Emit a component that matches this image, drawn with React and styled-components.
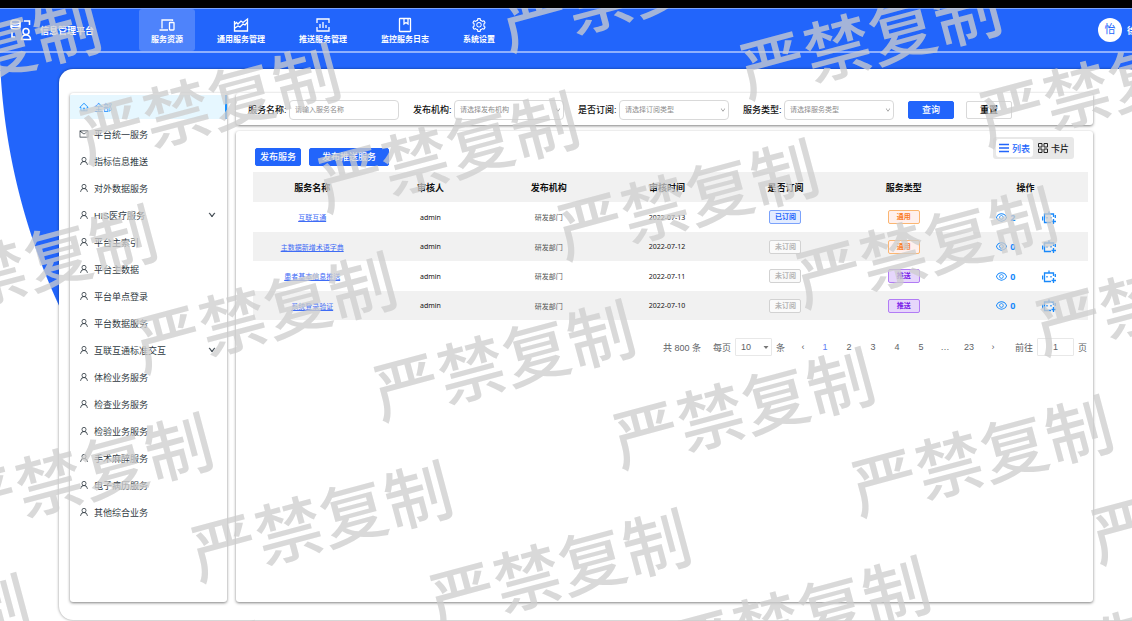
import React from "react";
import styled, { createGlobalStyle, css } from "styled-components";
import {
  AiOutlineHome,
  AiOutlineMail,
  AiOutlineUser,
  AiOutlineDown,
  AiOutlineEye,
  AiOutlineSetting,
} from "react-icons/ai";

const blue = "#2265fb";
const actionBlue = "#1989fa";

const GlobalStyle = createGlobalStyle`
  *, *::before, *::after { box-sizing: border-box; }
  body {
    margin: 0;
    background: #fff;
    color: #111;
    overflow: hidden;
    font-family: "Liberation Sans", "Noto Sans CJK SC", sans-serif;
    font-size: 9px;
  }
  button, input, select { font-family: inherit; margin: 0; }
  a { color: inherit; }
`;

const Page = styled.div`
  position: relative;
  display: flex;
  flex-direction: column;
  min-height: 100vh;
  overflow: hidden;
  border-top: 8px solid #000;
  background: radial-gradient(circle 641px at 640px 28px, ${blue} 640px, #fff 641px) 0 0 / 100% 500px no-repeat;
`;

const Header = styled.header`
  display: flex;
  align-items: center;
  height: 45px;
  padding-left: 10px;
  background: ${blue};
  border-top: 1px solid #7aa3ff;
  border-bottom: 2px solid #8fb0fd;
  color: #fff;
  white-space: nowrap;
`;

const Brand = styled.div`
  display: flex;
  align-items: center;
  gap: 8px;
  width: 129px;
  font-size: 9px;
  font-weight: 700;
`;

const Nav = styled.nav`
  display: flex;
  gap: 10px;
  flex: 1;
  align-self: stretch;
`;

const NavItem = styled.a`
  display: flex;
  flex-direction: column;
  align-items: center;
  gap: 1px;
  padding: 8px 12px 0;
  border-radius: 3px;
  background: ${(p) => (p.$active ? "rgba(255,255,255,.2)" : "transparent")};
  font-size: 8px;
  line-height: 12px;
  font-weight: 700;
  text-decoration: none;
  svg { width: 16px; height: 16px; }
`;

const User = styled.div`
  display: flex;
  align-items: center;
  gap: 5px;
  width: 34px;
  font-weight: 700;
`;

const Avatar = styled.span`
  flex: none;
  width: 24px;
  height: 24px;
  border-radius: 50%;
  background: #fff;
  color: ${blue};
  font-size: 11px;
  line-height: 23px;
  font-weight: 400;
  text-align: center;
`;

const Workspace = styled.main`
  display: flex;
  flex: 1;
  gap: 9px;
  margin: 16px -10px 1px 59px;
  padding: 24px 49px 18px 11px;
  border-radius: 14px;
  background: #fff;
  box-shadow: 0 0 3px rgba(0, 0, 0, 0.45);
`;

const panel = css`
  background: #fff;
  border-radius: 3px;
  box-shadow: 0 1px 3px rgba(0, 0, 0, 0.5);
`;

const Sidebar = styled.aside`
  ${panel}
  flex: none;
  width: 157px;
  padding-top: 2px;
`;

const Menu = styled.ul`
  display: flex;
  flex-direction: column;
  gap: 3px;
  margin: 0;
  padding: 0;
  list-style: none;
`;

const MenuLink = styled.a`
  display: flex;
  align-items: center;
  gap: 5px;
  height: 24px;
  padding: 0 9px;
  border-right: 2px solid ${(p) => (p.$active ? "#1890ff" : "transparent")};
  background: ${(p) => (p.$active ? "#e6f7ff" : "transparent")};
  color: ${(p) => (p.$active ? "#1890ff" : "#303a42")};
  font-size: 9px;
  text-decoration: none;
  svg { width: 10px; height: 10px; }
  span { flex: 1; }
  span + svg { width: 8px; height: 8px; stroke-width: 60; stroke: currentColor; }
`;

const Content = styled.div`
  display: flex;
  flex-direction: column;
  flex: 1;
  gap: 6px;
  min-width: 0;
`;

const FilterBar = styled.form`
  ${panel}
  display: flex;
  align-items: center;
  gap: 14px;
  height: 32px;
  padding: 1px 12px 0;
`;

const Field = styled.div`
  display: flex;
  align-items: center;
  label {
    width: 41px;
    font-size: 9px;
    font-weight: 500;
    white-space: nowrap;
  }
`;

const control = css`
  height: 20px;
  border: 1px solid #d9d9d9;
  border-radius: 4px;
  background-color: #fff;
  color: #8c8c8c;
  outline: none;
`;

const TextInput = styled.input`
  ${control}
  width: 110px;
  padding: 0 5px;
  font-size: 7px;
  &::placeholder { color: #8c8c8c; }
`;

const SelectBox = styled.span`
  display: grid;
  align-items: center;
  select, svg { grid-area: 1 / 1; }
  svg {
    justify-self: end;
    margin-right: 3px;
    width: 6px;
    height: 6px;
    color: #777;
    pointer-events: none;
  }
`;

const Select = styled.select`
  ${control}
  appearance: none;
  width: 110px;
  padding: 0 5px;
  font-size: 7px;
`;

const Button = styled.button`
  height: 18px;
  padding: 0 ${(p) => p.$pad || 5}px;
  border: 1px solid ${(p) => (p.$plain ? "#d9d9d9" : blue)};
  border-radius: 2px;
  background: ${(p) => (p.$plain ? "#fff" : blue)};
  color: ${(p) => (p.$plain ? "#111" : "#fff")};
  font-size: 9px;
  line-height: 16px;
  font-weight: ${(p) => (p.$plain ? 700 : 500)};
  white-space: nowrap;
`;

const ButtonGroup = styled.div`
  display: flex;
  gap: ${(p) => p.$gap}px;
`;

const TablePanel = styled.section`
  ${panel}
  flex: 1;
  padding: 6px 5px 0 17px;
`;

const Toolbar = styled.div`
  display: flex;
  justify-content: space-between;
  align-items: flex-end;
  height: 29px;
  margin-bottom: 6px;
  padding: 0 14px 0 2px;
`;

const ViewSwitch = styled.div`
  display: flex;
  align-self: flex-start;
  gap: 2px;
  padding: 2px 2px 2px 3px;
  border-radius: 3px;
  background: #e8e8e8;
`;

const ViewButton = styled.button`
  display: flex;
  align-items: center;
  gap: 3px;
  height: 18px;
  padding: 0 3px;
  border: 0;
  border-radius: 3px;
  background: ${(p) => (p.$active ? "#fff" : "transparent")};
  color: ${(p) => (p.$active ? blue : "#222")};
  font-size: 9px;
  font-weight: 500;
  white-space: nowrap;
`;

const Table = styled.table`
  width: 100%;
  table-layout: fixed;
  border-collapse: collapse;
  text-align: center;
  th, td { padding: 0; }
  th { width: 14.17%; height: 30px; font-size: 9px; font-weight: 700; }
  th:last-child { width: auto; }
  thead tr { background: #f1f1f1; }
  td { height: 29px; font-size: 7px; font-family: "Noto Sans", "Noto Sans CJK SC", sans-serif; }
  tbody tr:nth-child(odd) td { height: 30px; }
  tbody tr:nth-child(even) { background: #f1f1f1; }
`;

const ServiceLink = styled.a`
  color: #3f6cf5;
`;

const Muted = styled.span`
  color: #555;
`;

const tones = {
  on: ["#2265fb", "#e3ecff", "#7ba2fb"],
  off: ["#b5b5b5", "#fafafa", "#d2d2d2"],
  orange: ["#fa7a1e", "#fff0ed", "#fbb672"],
  purple: ["#7a1be8", "#e6d6fb", "#b27cf5"],
};

const Tag = styled.span`
  display: inline-block;
  width: 32px;
  height: 14px;
  border: 1px solid ${(p) => tones[p.$tone][2]};
  border-radius: 2px;
  background: ${(p) => tones[p.$tone][1]};
  color: ${(p) => tones[p.$tone][0]};
  font-size: 7px;
  line-height: 12px;
  font-weight: 700;
  vertical-align: middle;
`;

const Actions = styled.div`
  display: flex;
  justify-content: center;
  align-items: center;
  gap: 26px;
  color: ${actionBlue};
`;

const ActionButton = styled.button`
  display: flex;
  align-items: center;
  gap: 2px;
  padding: 0;
  border: 0;
  background: none;
  color: inherit;
  font-family: "Noto Sans", sans-serif;
  font-size: 9px;
  font-weight: 700;
`;

const Pagination = styled.nav`
  display: flex;
  justify-content: flex-end;
  align-items: center;
  height: 18px;
  margin-top: 18px;
  padding-right: 1px;
  color: #606266;
  font-size: 9px;
  white-space: nowrap;
`;

const PageList = styled.div`
  display: flex;
  margin: 0 10px 0 8px;
`;

const PageButton = styled.button`
  width: 24px;
  padding: 0;
  border: 0;
  background: none;
  color: ${(p) => (p.$active ? "#5b7df5" : "#606266")};
  font-size: 9px;
  &:first-child { width: 20px; }
`;

const PerPage = styled.label`
  display: flex;
  align-items: center;
  gap: 4px;
  margin-left: ${(p) => p.$before || 0}px;
  select, input {
    width: 37px;
    height: 18px;
    border: 1px solid #e8e8e8;
    border-radius: 1px;
    background: #fff;
    color: #606266;
    font-size: 9px;
  }
  select { appearance: none; padding: 0 5px; }
  input { text-align: center; padding: 0; }
`;

const Watermark = styled.div`
  position: absolute;
  inset: 0;
  display: flex;
  align-items: center;
  justify-content: center;
  padding: 28px 0 0 84px;
  overflow: hidden;
  pointer-events: none;
`;

const MarkSheet = styled.div`
  flex: none;
  transform: rotate(-15deg);
  color: rgba(205, 205, 205, 0.76);
  font-family: "Noto Sans CJK SC", sans-serif;
  font-size: 67px;
  font-weight: 500;
  line-height: 108px;
  white-space: nowrap;
`;

const MarkRow = styled.div`
  display: flex;
  gap: 169px;
  padding-left: ${(p) => (p.$shift ? 218 : 0)}px;
`;

const line = { fill: "none", stroke: "currentColor", strokeWidth: 1.3 };

const LogoIcon = () => (
  <svg width="22" height="22" viewBox="0 0 22 22" {...line} strokeWidth="1.6">
    <ellipse cx="5.500" cy="3" rx="4.500" ry="2" />
    <path d="M1 3v5c0 2.500 9 2.500 9 0V3M1 5.500c0 2.500 9 2.500 9 0M14 2h5.500v4M2 13v5h3" />
    <circle cx="16" cy="12.500" r="3" />
    <path d="M11.500 20.500c0-6 9-6 9 0z" />
  </svg>
);

const DevicesIcon = () => (
  <svg viewBox="0 0 16 16" {...line}>
    <path d="M3 11.500V3h10.500v1M.5 13H9" />
    <rect x="10.500" y="5.500" width="4.500" height="7.500" rx=".5" />
  </svg>
);

const TrendIcon = () => (
  <svg viewBox="0 0 16 16" {...line}>
    <path d="M1.500 4v10h13V2L10 5.500 8 4 5 7 3.500 5.500 1.500 7.500M2 11l3-2 2 1 3-3 2 1 2.500-3" />
  </svg>
);

const ScanChartIcon = () => (
  <svg viewBox="0 0 16 16" {...line}>
    <path d="M2 6V2h12v4M2 10v4h12v-4M5 7v4M8 5v6M11 8v3" />
  </svg>
);

const BookIcon = () => (
  <svg viewBox="0 0 16 16" {...line}>
    <rect x="2.500" y="1.500" width="11" height="13" rx=".5" />
    <path d="M7 2v5l2-1.500L11 7V2" />
  </svg>
);

const ListIcon = () => (
  <svg width="10" height="10" viewBox="0 0 10 10" {...line}>
    <path d="M0 1.500h10M0 5h10M0 8.500h10" />
  </svg>
);

const GridIcon = () => (
  <svg width="10" height="10" viewBox="0 0 10 10" {...line} strokeWidth="1">
    <path d="M.5.5h3.500v3.500H.5zM6 .5h3.500v3.500H6zM.5 6h3.500v3.500H.5zM6 6h3.500v3.500H6z" />
  </svg>
);

const RobotAddIcon = () => (
  <svg width="14" height="13" viewBox="0 0 14 13" {...line}>
    <path d="M11.500 6V3h-9v8.500H9M7 3V.500M.600 5.500v4M13.300 4v3M11.500 8v5M9.500 10.500H14" />
    <path d="M5 6v1.500M9 6v1.500" />
  </svg>
);

const CaretIcon = () => (
  <svg viewBox="0 0 6 6" fill="currentColor">
    <path d="M.5 2h5L3 5z" />
  </svg>
);

const navItems = [
  ["服务资源", DevicesIcon],
  ["通用服务管理", TrendIcon],
  ["推送服务管理", ScanChartIcon],
  ["监控服务日志", BookIcon],
  ["系统设置", AiOutlineSetting],
];

const menuItems = [
  ["全部", AiOutlineHome],
  ["平台统一服务", AiOutlineMail],
  ["指标信息推送"],
  ["对外数据服务"],
  ["HIS医疗服务", null, true],
  ["平台主索引"],
  ["平台主数据"],
  ["平台单点登录"],
  ["平台数据服务"],
  ["互联互通标准交互", null, true],
  ["体检业务服务"],
  ["检查业务服务"],
  ["检验业务服务"],
  ["手术麻醉服务"],
  ["电子病历服务"],
  ["其他综合业务"],
];

const selects = [
  ["org", "发布机构:", "请选择发布机构"],
  ["subscribed", "是否订阅:", "请选择订阅类型"],
  ["type", "服务类型:", "请选择服务类型"],
];

const columns = ["服务名称", "审核人", "发布机构", "审核时间", "是否订阅", "服务类型", "操作"];

const rows = [
  ["互联互通", "2022-07-13", true, "通用", 2],
  ["主数据新增术语字典", "2022-07-12", false, "通用", 0],
  ["患者基本信息推送", "2022-07-11", false, "推送", 0],
  ["系统登录验证", "2022-07-10", false, "推送", 0],
];

export default function App() {
  return (
    <>
      <GlobalStyle />
      <Page>
        <Header>
          <Brand>
            <LogoIcon />
            信息管理平台
          </Brand>
          <Nav>
            {navItems.map(([label, Icon], i) => (
              <NavItem key={label} href="#" $active={i === 0}>
                <Icon />
                {label}
              </NavItem>
            ))}
          </Nav>
          <User>
            <Avatar>怡</Avatar>
            徐
          </User>
        </Header>

        <Workspace>
          <Sidebar>
            <Menu>
              {menuItems.map(([label, Icon, open], i) => {
                const ItemIcon = Icon || AiOutlineUser;
                return (
                  <li key={label}>
                    <MenuLink href="#" $active={i === 0}>
                      <ItemIcon />
                      <span>{label}</span>
                      {open && <AiOutlineDown />}
                    </MenuLink>
                  </li>
                );
              })}
            </Menu>
          </Sidebar>

          <Content>
            <FilterBar>
              <Field>
                <label htmlFor="name">服务名称:</label>
                <TextInput id="name" placeholder="请输入服务名称" />
              </Field>
              {selects.map(([id, label, hint]) => (
                <Field key={id}>
                  <label htmlFor={id}>{label}</label>
                  <SelectBox>
                    <Select id={id}>
                      <option>{hint}</option>
                    </Select>
                    <AiOutlineDown />
                  </SelectBox>
                </Field>
              ))}
              <ButtonGroup $gap={12}>
                <Button type="button" $pad={13}>查询</Button>
                <Button type="button" $pad={13} $plain>重置</Button>
              </ButtonGroup>
            </FilterBar>

            <TablePanel>
              <Toolbar>
                <ButtonGroup $gap={8}>
                  <Button type="button" $pad={4}>发布服务</Button>
                  <Button type="button" $pad={12}>发布推送服务</Button>
                </ButtonGroup>
                <ViewSwitch>
                  <ViewButton type="button" $active>
                    <ListIcon />
                    列表
                  </ViewButton>
                  <ViewButton type="button">
                    <GridIcon />
                    卡片
                  </ViewButton>
                </ViewSwitch>
              </Toolbar>

              <Table>
                <thead>
                  <tr>
                    {columns.map((c) => (
                      <th key={c}>{c}</th>
                    ))}
                  </tr>
                </thead>
                <tbody>
                  {rows.map(([name, date, on, type, views]) => (
                    <tr key={name}>
                      <td><ServiceLink href="#">{name}</ServiceLink></td>
                      <td>admin</td>
                      <td><Muted>研发部门</Muted></td>
                      <td>{date}</td>
                      <td><Tag $tone={on ? "on" : "off"}>{on ? "已订阅" : "未订阅"}</Tag></td>
                      <td><Tag $tone={type === "通用" ? "orange" : "purple"}>{type}</Tag></td>
                      <td>
                        <Actions>
                          <ActionButton type="button">
                            <AiOutlineEye size={13} />
                            {views}
                          </ActionButton>
                          <ActionButton type="button" aria-label="添加">
                            <RobotAddIcon />
                          </ActionButton>
                        </Actions>
                      </td>
                    </tr>
                  ))}
                </tbody>
              </Table>

              <Pagination>
                <span>共 800 条</span>
                <PerPage $before={12}>
                  每页
                  <SelectBox>
                    <select>
                      <option>10</option>
                    </select>
                    <CaretIcon />
                  </SelectBox>
                  条
                </PerPage>
                <PageList>
                  {["‹", "1", "2", "3", "4", "5", "…", "23", "›"].map((p) => (
                    <PageButton key={p} type="button" $active={p === "1"}>{p}</PageButton>
                  ))}
                </PageList>
                <PerPage>
                  前往
                  <input defaultValue="1" />
                  页
                </PerPage>
              </Pagination>
            </TablePanel>
          </Content>
        </Workspace>

        <Watermark aria-hidden="true">
          <MarkSheet>
            {Array.from({ length: 11 }, (_, r) => (
              <MarkRow key={r} $shift={r % 2 === 1}>
                {Array.from({ length: 4 }, (_, c) => (
                  <span key={c}>严禁复制</span>
                ))}
              </MarkRow>
            ))}
          </MarkSheet>
        </Watermark>
      </Page>
    </>
  );
}
